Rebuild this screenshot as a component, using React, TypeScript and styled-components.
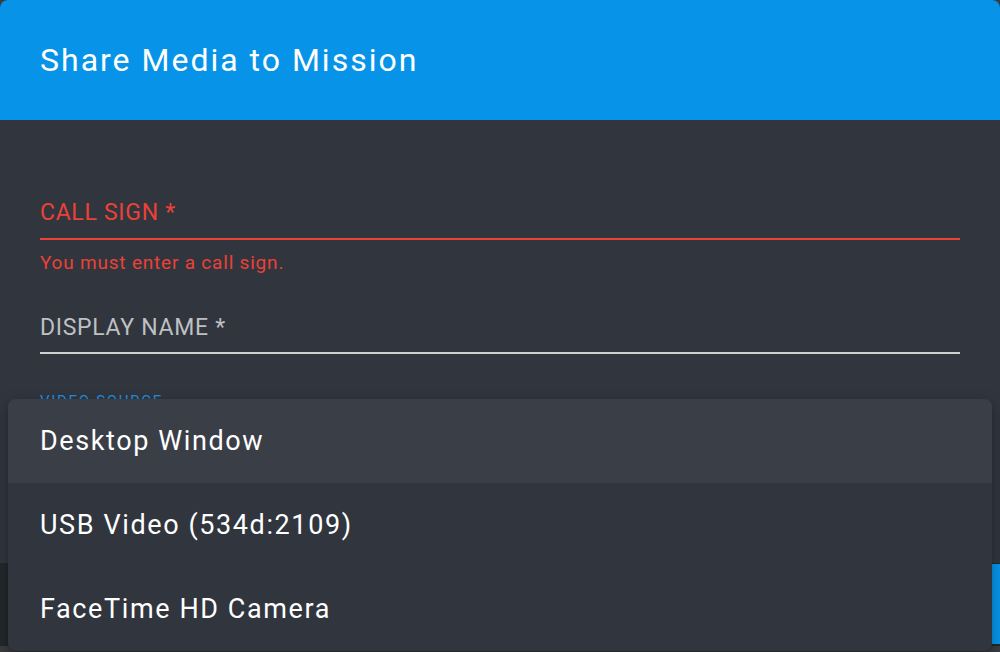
import React from "react";
import styled, { createGlobalStyle } from "styled-components";

const Global = createGlobalStyle`
  html, body {
    margin: 0;
    padding: 0;
    background: #2b2d31;
    overflow: hidden;
  }
  * { box-sizing: border-box; }
  body { font-family: Roboto, "Noto Sans", sans-serif; }
`;

const Screen = styled.div`
  width: 1000px;
  height: 652px;
  position: relative;
  background: #3b3c3f;
  overflow: hidden;
`;

const Dialog = styled.div`
  width: 1000px;
  height: 646px;
  display: flex;
  flex-direction: column;
  border-radius: 8px 8px 0 0;
  overflow: hidden;
  background: #24272c;
`;

const Header = styled.header`
  height: 120px;
  flex: none;
  background: #0794e8;
  display: flex;
  align-items: center;
  padding: 0 40px;
`;

const Title = styled.h1`
  margin: 0;
  color: #ffffff;
  font-size: 32px;
  font-weight: 400;
  letter-spacing: 2px;
`;

const Body = styled.div`
  height: 443px;
  flex: none;
  background: #31353e;
  padding: 79px 40px 0;
  display: flex;
  flex-direction: column;
`;

const Label = styled.div<{ $error?: boolean }>`
  font-size: 23px;
  line-height: 28px;
  letter-spacing: 0.7px;
  color: ${(p) => (p.$error ? "#ec4137" : "#bfc0c3")};
  margin-top: ${(p) => (p.$error ? "0" : "40px")};
`;

const Underline = styled.div<{ $error?: boolean }>`
  height: 2px;
  margin-top: ${(p) => (p.$error ? "11px" : "10px")};
  background: ${(p) => (p.$error ? "#ec4137" : "#cfd0d2")};
`;

const ErrorText = styled.div`
  margin-top: 12px;
  font-size: 19px;
  line-height: 22px;
  letter-spacing: 0.8px;
  color: #ec4137;
`;

const SmallLabel = styled.div`
  margin-top: 38px;
  font-size: 15px;
  line-height: 18px;
  letter-spacing: 1.7px;
  color: #1c8fe0;
`;

const Footer = styled.div`
  flex: 1;
  display: flex;
  justify-content: flex-end;
  align-items: flex-start;
  padding-top: 1px;
`;

const FooterButton = styled.div`
  width: 8px;
  height: 80px;
  background: #0794e8;
`;

const Menu = styled.div`
  position: absolute;
  top: 399px;
  left: 8px;
  width: 984px;
  border-radius: 8px;
  overflow: hidden;
  background: #31353e;
  box-shadow: 0 5px 5px -3px rgba(0, 0, 0, 0.2), 0 8px 10px 1px rgba(0, 0, 0, 0.14),
    0 3px 14px 2px rgba(0, 0, 0, 0.12);
`;

const MenuItem = styled.div<{ $active?: boolean }>`
  height: 84px;
  display: flex;
  align-items: center;
  padding: 0 32px;
  font-size: 27px;
  letter-spacing: 1.6px;
  color: #ffffff;
  background: ${(p) => (p.$active ? "#3a3e47" : "transparent")};
`;

export default function App() {
  return (
    <>
      <Global />
      <Screen>
        <Dialog>
          <Header>
            <Title>Share Media to Mission</Title>
          </Header>
          <Body>
            <Label $error>CALL SIGN *</Label>
            <Underline $error />
            <ErrorText>You must enter a call sign.</ErrorText>
            <Label>DISPLAY NAME *</Label>
            <Underline />
            <SmallLabel>VIDEO SOURCE</SmallLabel>
          </Body>
          <Footer>
            <FooterButton />
          </Footer>
        </Dialog>
        <Menu>
          <MenuItem $active>Desktop Window</MenuItem>
          <MenuItem>USB Video (534d:2109)</MenuItem>
          <MenuItem>FaceTime HD Camera</MenuItem>
        </Menu>
      </Screen>
    </>
  );
}
